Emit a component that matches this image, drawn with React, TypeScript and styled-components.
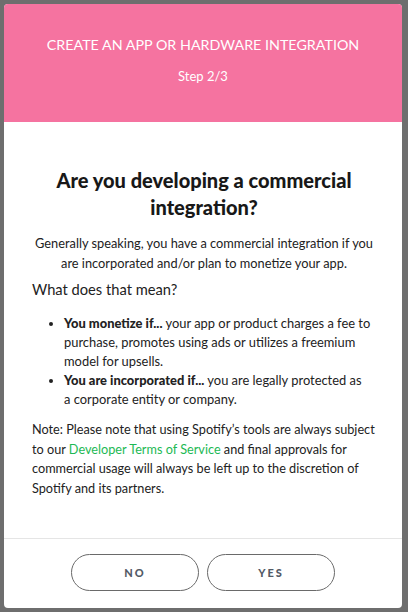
import React from "react";
import styled, { createGlobalStyle } from "styled-components";

const Global = createGlobalStyle`
  html, body { margin: 0; padding: 0; background: #6e6e6e; }
  body { font-family: Lato, "Noto Sans", sans-serif; }
  * { box-sizing: border-box; }
`;

const Page = styled.div`
  width: 408px;
  height: 612px;
  padding: 4px 6px 4px 4px;
  display: flex;
`;

const Modal = styled.div`
  flex: 1;
  display: flex;
  flex-direction: column;
  background: #ffffff;
  border-radius: 4px;
  overflow: hidden;
`;

const Header = styled.header`
  height: 118px;
  background: #f573a0;
  color: #ffffff;
  display: flex;
  flex-direction: column;
  align-items: center;
  padding-top: 32px;
  gap: 15px;
`;

const HeaderTitle = styled.div`
  font-size: 14.3px;
  text-transform: uppercase;
  line-height: 17px;
`;

const HeaderStep = styled.div`
  font-size: 13px;
  line-height: 17px;
`;

const Body = styled.main`
  flex: 1;
  padding: 45px 26px 0 28px;
  color: #222;
`;

const Heading = styled.h1`
  margin: 0 0 12px;
  font-size: 20px;
  font-weight: 900;
  line-height: 27px;
  text-align: center;
  color: #181818;
`;

const Lead = styled.p`
  margin: 0 0 6px;
  font-size: 12.8px;
  line-height: 20px;
  text-align: center;
`;

const SubHeading = styled.h2`
  margin: 0 0 15px;
  font-size: 14.7px;
  font-weight: 400;
  line-height: 20px;
`;

const List = styled.ul`
  margin: 0 0 11px;
  padding-left: 32px;
  font-size: 12.9px;
  line-height: 19px;
`;

const Item = styled.li``;

const Lead2 = styled.strong`
  font-weight: 900;
`;

const Note = styled.p`
  margin: 0;
  font-size: 12.7px;
  line-height: 19.5px;
`;

const Link = styled.a`
  color: #1db954;
  text-decoration: none;
`;

const Footer = styled.footer`
  height: 70px;
  border-top: 1px solid #e5e5e5;
  display: flex;
  justify-content: center;
  align-items: center;
  gap: 8px;
  padding-bottom: 2px;
`;

const Button = styled.button`
  width: 128px;
  height: 37px;
  border-radius: 19px;
  border: 1px solid #6a6a6a;
  background: #fff;
  color: #535a66;
  font-family: Lato, sans-serif;
  font-weight: 900;
  font-size: 11px;
  letter-spacing: 2px;
  cursor: pointer;
`;

export default function App() {
  return (
    <>
      <Global />
      <Page>
        <Modal>
          <Header>
            <HeaderTitle>Create an app or hardware integration</HeaderTitle>
            <HeaderStep>Step 2/3</HeaderStep>
          </Header>
          <Body>
            <Heading>Are you developing a commercial integration?</Heading>
            <Lead>
              Generally speaking, you have a commercial integration if you are
              incorporated and/or plan to monetize your app.
            </Lead>
            <SubHeading>What does that mean?</SubHeading>
            <List>
              <Item>
                <Lead2>You monetize if...</Lead2> your app or product charges a
                fee to purchase, promotes using ads or utilizes a freemium model
                for upsells.
              </Item>
              <Item>
                <Lead2>You are incorporated if...</Lead2> you are legally
                protected as a{"\u00A0"}corporate entity or company.
              </Item>
            </List>
            <Note>
              Note: Please note that using Spotify’s tools are always subject to
              our <Link href="#">Developer Terms of Service</Link> and final
              approvals for commercial usage will always be left up to the
              discretion of Spotify and its partners.
            </Note>
          </Body>
          <Footer>
            <Button>NO</Button>
            <Button>YES</Button>
          </Footer>
        </Modal>
      </Page>
    </>
  );
}
